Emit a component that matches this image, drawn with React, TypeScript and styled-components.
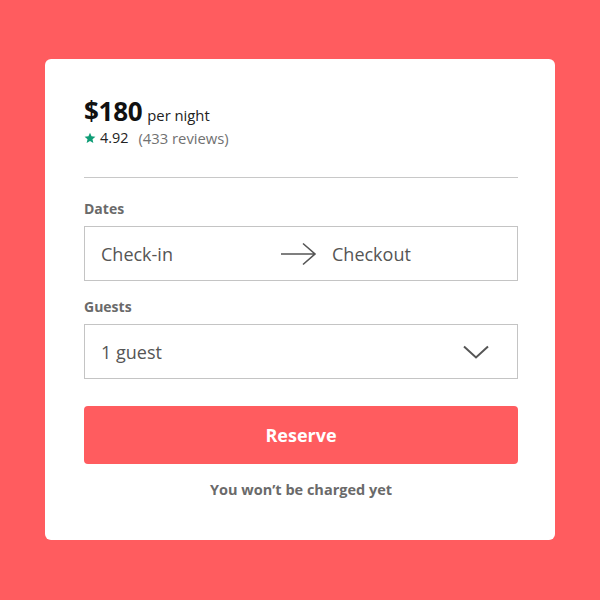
import React from 'react';
import styled, { createGlobalStyle } from 'styled-components';

const GlobalStyle = createGlobalStyle`
  html, body {
    margin: 0;
    padding: 0;
    background: #ff5c5f;
  }
  body {
    font-family: 'Open Sans', 'Liberation Sans', sans-serif;
  }
`;

const Page = styled.div`
  width: 600px;
  height: 600px;
  display: flex;
  align-items: flex-start;
  justify-content: center;
  padding-top: 59px;
  box-sizing: border-box;
`;

const Card = styled.div`
  width: 510px;
  height: 481px;
  box-sizing: border-box;
  background: #ffffff;
  border-radius: 6px;
  padding: 36px 37px 0 39px;
  display: flex;
  flex-direction: column;
`;

const PriceRow = styled.div`
  display: flex;
  align-items: baseline;
  gap: 5px;
  color: #111;
`;

const Price = styled.span`
  font-size: 26px;
  font-weight: 700;
  line-height: 32px;
  letter-spacing: -0.3px;
`;

const PerNight = styled.span`
  font-size: 14.8px;
  color: #222;
`;

const RatingRow = styled.div`
  display: flex;
  align-items: center;
  margin-top: 1px;
  font-size: 14.4px;
  line-height: 20px;
`;

const Score = styled.span`
  color: #222;
  margin-left: 4px;
`;

const Reviews = styled.span`
  color: #717171;
  font-size: 14.8px;
  margin-left: 10px;
`;

const Divider = styled.hr`
  border: none;
  border-top: 1px solid #c8c8c8;
  margin: 29px 0 0 0;
`;

const Label = styled.div<{ $top: number }>`
  margin-top: ${({ $top }) => $top}px;
  font-size: 14px;
  font-weight: 700;
  color: #6a6a6a;
  line-height: 20px;
`;

const Field = styled.div`
  margin-top: 7px;
  height: 55px;
  box-sizing: border-box;
  border: 1px solid #c4c4c4;
  display: flex;
  align-items: center;
  padding: 0 28px 0 16px;
  font-size: 18px;
  color: #555;
`;

const DateHalf = styled.span`
  width: 179px;
`;

const ArrowBox = styled.span`
  display: flex;
  align-items: center;
  margin-right: 15px;
`;

const Grow = styled.span`
  flex: 1;
`;

const ReserveButton = styled.button`
  margin-top: 27px;
  height: 58px;
  border: none;
  border-radius: 4px;
  background: #ff5c5f;
  color: #fff;
  font-family: inherit;
  font-size: 18px;
  font-weight: 700;
  cursor: pointer;
`;

const Note = styled.div`
  margin-top: 16px;
  text-align: center;
  font-size: 14.5px;
  font-weight: 700;
  color: #6a6a6a;
`;

const Star = () => (
  <svg width="12" height="12" viewBox="0 0 24 24">
    <path
      fill="#0f9d76"
      d="M12 1.5l3.1 7.1 7.7.7-5.8 5.1 1.7 7.6L12 18l-6.7 4 1.7-7.6-5.8-5.1 7.7-.7z"
    />
  </svg>
);

const Arrow = () => (
  <svg width="37" height="24" viewBox="0 0 37 24" fill="none">
    <path d="M1 12h34M23 1.5L35 12 23 22.5" stroke="#555" strokeWidth="1.6" />
  </svg>
);

const Chevron = () => (
  <svg width="26" height="14" viewBox="0 0 26 14" fill="none">
    <path d="M1 1.5l12 11 12-11" stroke="#555" strokeWidth="2" />
  </svg>
);

const App: React.FC = () => (
  <>
    <GlobalStyle />
    <Page>
      <Card>
        <PriceRow>
          <Price>$180</Price>
          <PerNight>per night</PerNight>
        </PriceRow>
        <RatingRow>
          <Star />
          <Score>4.92</Score>
          <Reviews>(433 reviews)</Reviews>
        </RatingRow>
        <Divider />
        <Label $top={21}>Dates</Label>
        <Field>
          <DateHalf>Check-in</DateHalf>
          <ArrowBox>
            <Arrow />
          </ArrowBox>
          <Grow>Checkout</Grow>
        </Field>
        <Label $top={16}>Guests</Label>
        <Field>
          <Grow>1 guest</Grow>
          <Chevron />
        </Field>
        <ReserveButton>Reserve</ReserveButton>
        <Note>You won’t be charged yet</Note>
      </Card>
    </Page>
  </>
);

export default App;
